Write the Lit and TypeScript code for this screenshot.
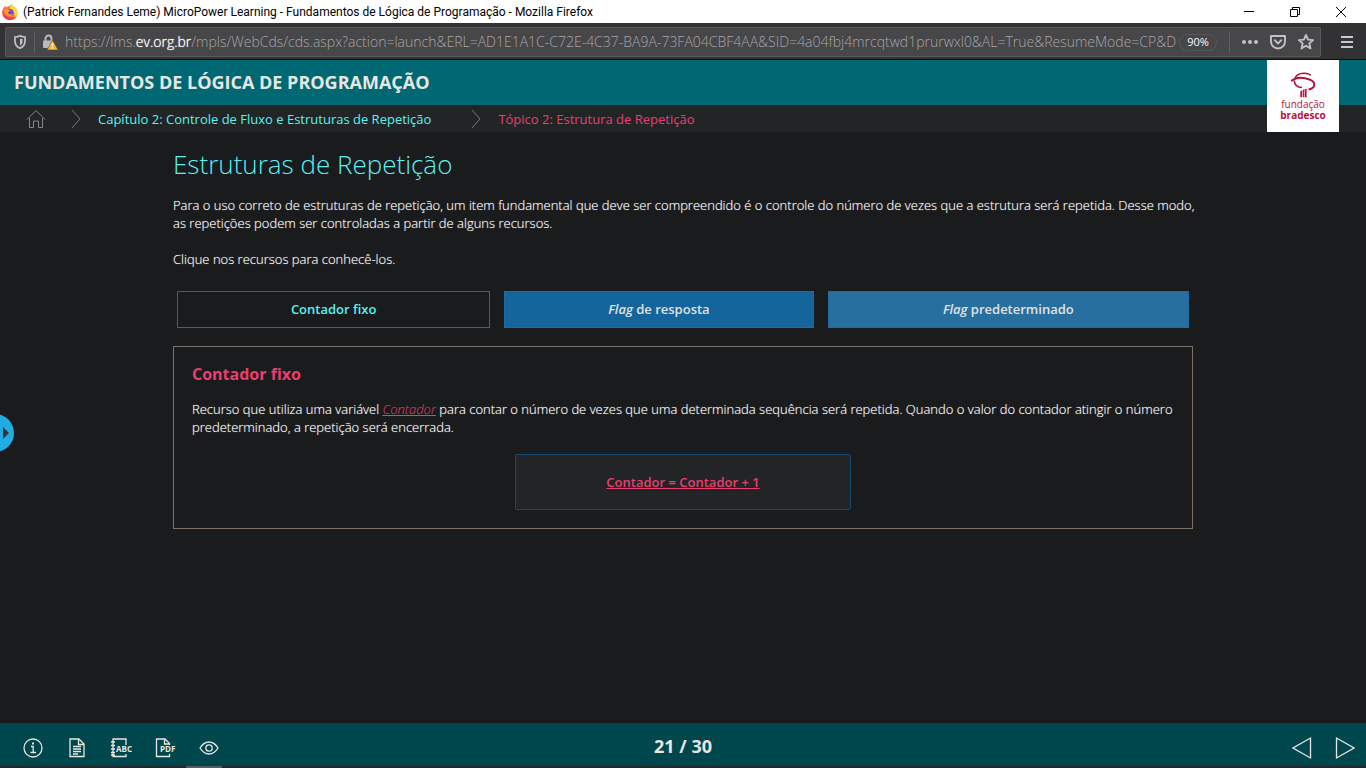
import { LitElement, html, css, svg } from "lit";
import { customElement, state } from "lit/decorators.js";

@customElement("browser-frame")
class BrowserFrame extends LitElement {
  static styles = css`
    :host { display: block; }
    button { border: 0; padding: 0; background: none; color: inherit; font: inherit; display: flex; align-items: center; justify-content: center; }
    svg { display: block; flex: none; }
    .titlebar { display: flex; align-items: center; height: 23px; padding-right: 2px; background: #fff; color: #000; font: 12px/16px Roboto, sans-serif; }
    .favicon { margin: 0 5px 0 2px; }
    .title { flex: 1; white-space: nowrap; overflow: hidden; }
    .window { width: 46px; height: 23px; flex: none; }
    .toolbar { display: flex; align-items: center; box-sizing: border-box; height: 37px; padding: 2px 0 0 5px; background: #323234; border-bottom: 1px solid #0c0c0d; }
    .address { display: flex; align-items: center; flex: 1; min-width: 0; box-sizing: border-box; height: 30px; border: 1px solid #5b5b5d; border-radius: 2px; background: #474749; color: #b1b1b3; }
    .shield { width: 28px; height: 28px; }
    .divider { width: 1px; height: 22px; background: #5f6062; flex: none; }
    .lock { width: 30px; height: 28px; }
    .url { flex: 1; min-width: 0; overflow: hidden; white-space: nowrap; font: 300 14px/24px "Open Sans", sans-serif; color: #a6a6a8; outline: 0; }
    .domain { color: #fff; text-shadow: 0 0 1px #fff; }
    .zoom { height: 17px; width: 38px; margin: 0 12px 0 3px; border: 1px solid #58585a; border-radius: 9px; color: #f9f9fa; font: 11px/14px "Open Sans", sans-serif; }
    .tool { width: 28px; height: 28px; }
    .tools { display: flex; padding: 0 0 0 6px; }
    .menu { width: 45px; height: 30px; padding-left: 6px; color: #c8c8ca; }
  `;

  render() {
    return html`
      <div class="titlebar">
        <svg class="favicon" width="16" height="18" viewBox="0 0 16 18">
          <path d="M1.500 5 2.800 3l1.700 1.300C6.500 3.200 8.500 3 9.300 1c1 2 3.500 2.500 5 5C17.500 12 13.500 17 8 17-.5 17-1 9 1.500 5Z" fill="#ff7b3a"/>
          <path d="M9.300 1c1 2 3.500 2.500 5 5 2.200 4.500.6 8-2 9.800 1-4 .5-7-3.500-9C7.300 5 8.300 3 9.300 1Z" fill="#ffd93a"/>
          <path d="M.6 7C0 12 3 17 8 17c3 0 5.500-1.600 6.500-4-4 3-12 2-13.900-6Z" fill="#f5364f"/>
          <circle cx="8" cy="9.500" r="3.600" fill="#7542e5"/>
          <path d="M3 7c2-1.200 4 0 5.600 0-.4 1.500-2 1.400-2.600 2.200 0 2 3 3 5 1.500-1 3.300-6.400 3-7.500-.4C3 9.300 3 8 3 7Z" fill="#ff9a26"/>
        </svg>
        <span class="title">(Patrick Fernandes Leme) MicroPower Learning - Fundamentos de Lógica de Programação - Mozilla Firefox</span>
        <button class="window" aria-label="Minimizar"><svg width="12" height="12"><path d="M1 5.500h10" stroke="#000"/></svg></button>
        <button class="window" aria-label="Restaurar"><svg width="12" height="12" fill="none" stroke="#000"><path d="M1.500 3.500h7v7h-7zM3.500 3.500v-2h7v7h-2"/></svg></button>
        <button class="window" aria-label="Fechar"><svg width="12" height="12"><path d="m1 1 10 10M11 1 1 11" stroke="#000"/></svg></button>
      </div>
      <div class="toolbar">
        <div class="address">
          <button class="shield" aria-label="Proteção"><svg width="14" height="16" viewBox="0 0 14 16" fill="none" stroke="#c2c2c4" stroke-width="1.700"><path d="M7 1.800C8.500 2.800 10.500 3 12 3v4c0 3.500-2 6-5 7.200C4 13 2 10.500 2 7V3c1.500 0 3.500-.2 5-1.200Z"/><path d="M7 4.500c.8.400 1.800.6 2.600.6V7c0 2-.8 3.500-2.600 4.700Z" fill="#c2c2c4" stroke="none"/></svg></button>
          <span class="divider"></span>
          <button class="lock" aria-label="Conexão"><svg width="16" height="16" viewBox="0 0 16 16"><path d="M3.500 7V4.500a3 3 0 0 1 6 0V7" fill="none" stroke="#b9b9bb" stroke-width="1.900"/><path d="M2 6.500h9v2L7 14H2a1 1 0 0 1-1-1V7.500a1 1 0 0 1 1-1Z" fill="#b9b9bb"/><path d="m10.500 6 5 9a.6.6 0 0 1-.5 1H6a.6.6 0 0 1-.5-1Z" fill="#ffb01f" stroke="#474749" stroke-width=".5"/><path d="M10.500 9.500v3M10.500 13.500v1.200" stroke="#fff" stroke-width="1.400"/></svg></button>
          <div class="url" role="textbox" aria-label="Endereço" contenteditable="true">https://lms.<span class="domain">ev.org.br</span>/mpls/WebCds/cds.aspx?action=launch&amp;ERL=AD1E1A1C-C72E-4C37-BA9A-73FA04CBF4AA&amp;SID=4a04fbj4mrcqtwd1prurwxl0&amp;AL=True&amp;ResumeMode=CP&amp;D</div>
          <button class="zoom">90%</button>
          <span class="divider"></span>
          <div class="tools">
            <button class="tool" aria-label="Mais ações"><svg width="18" height="6" fill="#c2c2c4"><circle cx="3" cy="3" r="2"/><circle cx="9" cy="3" r="2"/><circle cx="15" cy="3" r="2"/></svg></button>
            <button class="tool" aria-label="Pocket"><svg width="18" height="16" viewBox="0 0 18 16" fill="none" stroke="#c2c2c4" stroke-width="1.900" stroke-linecap="round" stroke-linejoin="round"><path d="M2 2h14v5.500a7 7 0 0 1-14 0Z"/><path d="m5.700 6.200 3.300 3.300 3.300-3.300"/></svg></button>
            <button class="tool" aria-label="Favoritar"><svg width="18" height="18" viewBox="0 0 18 18" fill="none" stroke="#c2c2c4" stroke-width="1.900" stroke-linejoin="round"><path d="m9 2 2.100 4.600 5 .5-3.800 3.300 1.200 5L9 12.800l-4.500 2.600 1.200-5L1.900 7.100l5-.5Z"/></svg></button>
          </div>
        </div>
        <button class="menu" aria-label="Abrir menu"><svg width="14" height="14"><path d="M1 2h12M1 7h12M1 12h12" stroke="currentColor" stroke-width="2"/></svg></button>
      </div>
    `;
  }
}

const chevron = svg`<svg class="chevron" width="10" height="20" fill="none" stroke="#74797b"><path d="m1 1 8 9-8 9"/></svg>`;

@customElement("course-header")
class CourseHeader extends LitElement {
  static styles = css`
    :host { display: block; position: relative; font-family: "Open Sans", sans-serif; }
    svg { display: block; flex: none; }
    .course { margin: 0; padding: 0 14px; height: 45px; background: #006872; color: #e8e6e3; font-size: 18px; line-height: 45px; font-weight: 700; white-space: nowrap; }
    .crumbs { display: flex; align-items: center; height: 27px; padding-left: 26px; background: #222526; font: 13px/25px "Open Sans", sans-serif; white-space: nowrap; }
    a { padding-top: 2px; color: #5af0f0; text-decoration: none; margin-right: 40px; }
    .home { padding: 0; margin-right: 25px; }
    .chevron { margin-right: 17px; }
    .current { color: #e83f6f; }
    .logo { position: absolute; right: 27px; top: 0; width: 72px; height: 72px; box-sizing: border-box; padding-top: 12px; background: #fff; color: #b5133b; display: flex; flex-direction: column; align-items: center; font: 10px/11px "Open Sans", sans-serif; }
    .logo svg { margin-bottom: 1px; }
  `;
  render() {
    return html`
      <h1 class="course">FUNDAMENTOS DE LÓGICA DE PROGRAMAÇÃO</h1>
      <nav class="crumbs" aria-label="Navegação">
        <a class="home" href="#" aria-label="Início"><svg width="20" height="20" fill="none" stroke="#85898a" stroke-linejoin="round"><path d="M1 10.500 10 1.500l9 9M3.500 9v9.500h4V12h5v6.500h4V9"/></svg></a>
        ${chevron}
        <a href="#capitulo">Capítulo 2: Controle de Fluxo e Estruturas de Repetição</a>
        ${chevron}
        <a class="current" href="#topico" aria-current="page">Tópico 2: Estrutura de Repetição</a>
      </nav>
      <div class="logo">
        <svg width="26" height="26" viewBox="0 0 26 26" fill="none" stroke="currentColor">
          <path d="M4.500 7.500C5.500 3.500 9.500 1.300 14 1.300c3 0 5.500.6 6.700 2.200" stroke-width="1.600"/>
          <path d="M1.200 9C5 6 10 5.200 15 6.200c5.500 1 9.300 3.300 9.300 6.300 0 2.400-1.600 4.200-5.800 5" stroke-width="2"/>
          <path d="M4.300 8.500c.2 4.500 3 6.800 7.700 7" stroke-width="1.600"/>
          <path d="M10.300 19.500l1.800-1.200v6.900h-1.800ZM12.800 18l1.600-.9v8.100h-1.600ZM15 17.300l1.600-.9v8.800H15Z" fill="currentColor" stroke="none"/>
        </svg>
        <span>fundação</span><b>bradesco</b>
      </div>
    `;
  }
}

const tabs = [
  { id: "contador", em: "", label: "Contador fixo" },
  { id: "resposta", em: "Flag", label: " de resposta" },
  { id: "predeterminado", em: "Flag", label: " predeterminado" },
];

@customElement("lesson-content")
class LessonContent extends LitElement {
  static styles = css`
    :host { display: block; box-sizing: border-box; width: 100%; max-width: 1020px; margin: 0 auto; padding: 14px 0; color: #e8e6e3; font: 13px/18px "Open Sans", sans-serif; }
    h2 { margin: 0 0 14px; color: #5af0f0; font-size: 26px; line-height: 36px; font-weight: 300; }
    p { margin: 0 -8px 18px 0; font-weight: 300; color: #fff; text-shadow: 0 0 1px rgb(255 255 255 / 55%); }
    .tabs { display: grid; grid-template-columns: 313fr 309fr 361fr; gap: 14px; margin: 23px 4px 18px; }
    .tab { height: 37px; border: 1px solid #1d6ba5; padding: 0 0 2px; background: #13659c; color: #e0e2e3; font: 600 13px/18px "Open Sans", sans-serif; }
    .tab:last-child { background: #276f9f; }
    .tab.active { background: #1a1b1d; color: #5af0f0; }
    .panel { border: 1px solid #7c7166; padding: 16px 18px 18px; }
    h3 { margin: 0 0 15px; color: #e83f6f; font-size: 16px; line-height: 22px; font-weight: 700; }
    .term { color: #e83f6f; text-decoration: underline; text-shadow: none; }
    .formula { box-sizing: border-box; width: 336px; max-width: 100%; margin: 0 auto; padding: 18px; border: 1px solid #154a70; border-radius: 2px; background: #222425; text-align: center; font-weight: 600; }
  `;
  @state() active = "contador";
  render() {
    return html`
      <h2>Estruturas de Repetição</h2>
      <p>Para o uso correto de estruturas de repetição, um item fundamental que deve ser compreendido é o controle do número de vezes que a estrutura será repetida. Desse modo, as repetições podem ser controladas a partir de alguns recursos.</p>
      <p>Clique nos recursos para conhecê-los.</p>
      <div class="tabs" role="tablist">
        ${tabs.map((t) => html`<button class="tab ${t.id === this.active ? "active" : ""}" role="tab" aria-selected=${t.id === this.active} @click=${() => (this.active = t.id)}>${t.em ? html`<em>${t.em}</em>` : ""}${t.label}</button>`)}
      </div>
      <section class="panel" role="tabpanel">
        <h3>Contador fixo</h3>
        <p>Recurso que utiliza uma variável <a class="term" href="#contador"><em>Contador</em></a> para contar o número de vezes que uma determinada sequência será repetida. Quando o valor do contador atingir o número predeterminado, a repetição será encerrada.</p>
        <div class="formula"><a class="term" href="#formula">Contador = Contador + 1</a></div>
      </section>
    `;
  }
}

@customElement("course-footer")
class CourseFooter extends LitElement {
  static styles = css`
    :host { display: block; font-family: "Open Sans", sans-serif; color: #e8e6e3; }
    .bar { display: grid; grid-template-columns: 1fr auto 1fr; align-items: center; height: 43px; box-sizing: border-box; padding: 6px 9px 0; background: #00464d; }
    .icons, .arrows { display: flex; align-items: center; }
    .icons { gap: 20px; padding-left: 12px; }
    .arrows { justify-content: flex-end; gap: 19px; }
    button { border: 0; padding: 0; width: 24px; height: 24px; background: none; color: inherit; display: flex; align-items: center; justify-content: center; }
    svg { display: block; fill: none; stroke: currentColor; stroke-width: 1.3; }
    .page { padding-bottom: 4px; font-size: 18px; line-height: 24px; font-weight: 700; }
    .edge { height: 2px; padding-left: 186px; background: #20262c; }
    .window { width: 36px; height: 2px; background: #565c61; }
    text { fill: currentColor; stroke: none; font: 700 8px "Open Sans", sans-serif; }
  `;
  render() {
    return html`
      <div class="bar">
        <div class="icons">
          <button aria-label="Informações"><svg width="20" height="20"><circle cx="10" cy="10" r="9"/><path d="M8 8.500h2.200v6M7.500 14.500H13"/><path d="M10 4.500v2" stroke-width="2"/></svg></button>
          <button aria-label="Texto"><svg width="18" height="22" stroke-width="1.700"><path d="M2 2h9l5 5v12.500H2zM10.500 2v5.500H16"/><path d="M5 9.500h8M5 12h8M5 14.500h8M5 17h5"/></svg></button>
          <button aria-label="Glossário"><svg width="22" height="22"><path d="M16 8V2H3v17.500h13V17M1 5h4M1 8.500h4M1 12h4M1 15.500h4M1 18h4"/><text x="6" y="15">ABC</text></svg></button>
          <button aria-label="PDF"><svg width="22" height="22"><path d="M15.500 8V6.500L11 2H2.500v17.500h13V17M10.500 2v5h5"/><text x="6" y="15">PDF</text></svg></button>
          <button aria-label="Visualização"><svg width="20" height="14"><path d="M1 7c5-8 13-8 18 0-5 8-13 8-18 0Z"/><circle cx="10" cy="7" r="3.200"/></svg></button>
        </div>
        <span class="page">21 / 30</span>
        <div class="arrows">
          <button aria-label="Anterior"><svg width="20" height="24"><path d="M18.500 2v20L1 12Z"/></svg></button>
          <button aria-label="Próxima"><svg width="20" height="24"><path d="M1.500 2v20L19 12Z"/></svg></button>
        </div>
      </div>
      <div class="edge"><div class="window"></div></div>
    `;
  }
}

@customElement("app-root")
class AppRoot extends LitElement {
  static styles = css`
    :host { display: flex; flex-direction: column; min-height: 100vh; background: #1a1b1d; }
    .stage { flex: 1; position: relative; overflow: hidden; }
    .drawer { position: absolute; left: -24px; top: 282px; width: 38px; height: 38px; border: 0; border-radius: 50%; padding: 0 0 0 26px; background: #23ace3; }
    .drawer svg { display: block; }
  `;
  render() {
    return html`
      <browser-frame></browser-frame>
      <course-header></course-header>
      <main class="stage">
        <lesson-content></lesson-content>
        <button class="drawer" aria-label="Abrir menu do curso"><svg width="7" height="12"><path d="M1 0v12l6-6Z" fill="#303638"/></svg></button>
      </main>
      <course-footer></course-footer>
    `;
  }
}
